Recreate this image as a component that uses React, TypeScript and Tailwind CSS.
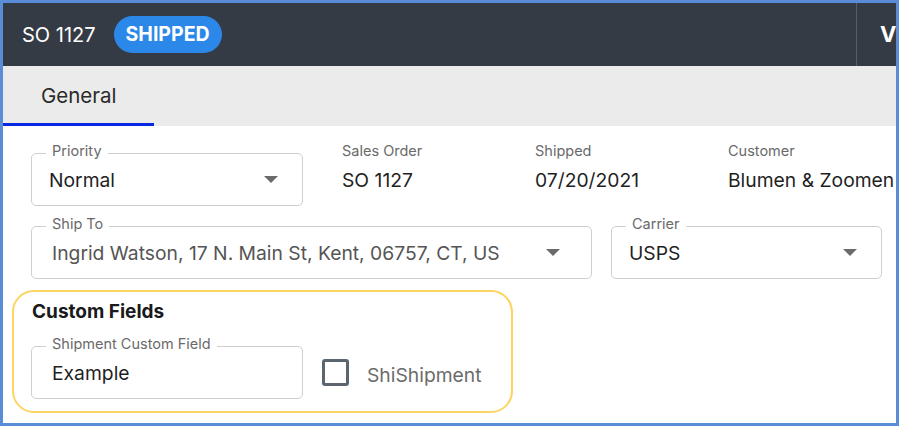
import React from "react";

const font = { fontFamily: "Inter, 'Noto Sans', sans-serif" };

function Caret() {
  return (
    <svg width="14" height="8" viewBox="0 0 14 8" className="shrink-0">
      <path d="M0 0 L14 0 L7 7 Z" fill="#6b6b6b" />
    </svg>
  );
}

function Outlined({
  label,
  value,
  width,
  select,
  valueClass = "text-[#1f1f1f]",
  valuePl = "pl-[17px]",
  pr = "pr-[24px]",
}: {
  label: string;
  value: string;
  width: string;
  select?: boolean;
  valueClass?: string;
  valuePl?: string;
  pr?: string;
}) {
  return (
    <div className={`relative h-[53px] shrink-0 ${width} rounded-[5px] border border-[#cfcfcf] flex items-center ${valuePl} ${pr}`}>
      <span className="absolute left-[14px] top-[-13px] bg-white px-[6px] text-[14.5px] leading-[20px] text-[#6a6a6a] whitespace-nowrap">
        {label}
      </span>
      <span className={`flex-1 text-[19.3px] leading-[24px] whitespace-nowrap ${valueClass}`}>{value}</span>
      {select && <Caret />}
    </div>
  );
}

function Static({ label, value }: { label: string; value: string }) {
  return (
    <div className="w-[193px] shrink-0 flex flex-col">
      <span className="text-[14.5px] leading-[20px] text-[#6a6a6a] mt-[-12px] whitespace-nowrap">{label}</span>
      <span className="text-[19.3px] leading-[24px] text-[#1f1f1f] mt-[7px] whitespace-nowrap">{value}</span>
    </div>
  );
}

export default function App() {
  return (
    <div style={font} className="w-[899px] h-[426px] bg-[#5a8dd8] p-[3px]">
      <div className="w-full h-full bg-white overflow-hidden flex flex-col">
        <div className="h-[63px] shrink-0 bg-[#353b45] flex items-center">
          <span className="ml-[19px] text-white text-[20px] leading-[24px] whitespace-nowrap">SO 1127</span>
          <span className="ml-[18px] h-[37px] px-[12px] rounded-full bg-[#2b88e8] text-white font-bold text-[19.5px] leading-[37px] whitespace-nowrap">
            SHIPPED
          </span>
          <div className="flex-1" />
          <div className="w-px h-full bg-[#5a5f66] shrink-0" />
          <div className="w-[39px] shrink-0 pl-[23px] overflow-hidden">
            <span className="text-white font-bold text-[22px] leading-[24px]">V</span>
          </div>
        </div>
        <div className="h-[60px] shrink-0 bg-[#ebebeb] flex">
          <div className="w-[151px] h-full relative flex items-center pl-[38px]">
            <span className="text-[20.5px] leading-[24px] text-[#2a2a2a]">General</span>
            <div className="absolute left-0 right-0 bottom-0 h-[3px] bg-[#0528e0]" />
          </div>
        </div>
        <div className="flex flex-col pl-[28px] pt-[27px]">
          <div className="flex items-start">
            <Outlined label="Priority" value="Normal" width="w-[272px]" select />
            <div className="w-[39px] shrink-0" />
            <Static label="Sales Order" value="SO 1127" />
            <Static label="Shipped" value="07/20/2021" />
            <Static label="Customer" value="Blumen & Zoomen" />
          </div>
          <div className="flex mt-[20px] gap-[19px]">
            <Outlined
              label="Ship To"
              value="Ingrid Watson, 17 N. Main St, Kent, 06757, CT, US"
              width="w-[561px]"
              select
              valueClass="text-[#555555]"
              valuePl="pl-[20px]"
              pr="pr-[31px]"
            />
            <Outlined label="Carrier" value="USPS" width="w-[271px]" select />
          </div>
          <div className="mt-[11px] ml-[-19px] w-[501px] h-[123px] rounded-[22px] border-2 border-[#fcd462] pl-[17px] pt-[8px]">
            <div className="text-[19px] leading-[24px] font-bold text-[#1a1a1a] ml-[1px]">Custom Fields</div>
            <div className="flex items-center mt-[22px]">
              <Outlined label="Shipment Custom Field" value="Example" width="w-[272px]" valuePl="pl-[20px]" />
              <div className="ml-[19px] w-[27px] h-[27px] shrink-0 rounded-[3px] border-[3px] border-[#5a6570]" />
              <span className="ml-[18px] text-[19.3px] leading-[24px] text-[#6b6b6b] mt-[4px] whitespace-nowrap">ShiShipment</span>
            </div>
          </div>
        </div>
      </div>
    </div>
  );
}
